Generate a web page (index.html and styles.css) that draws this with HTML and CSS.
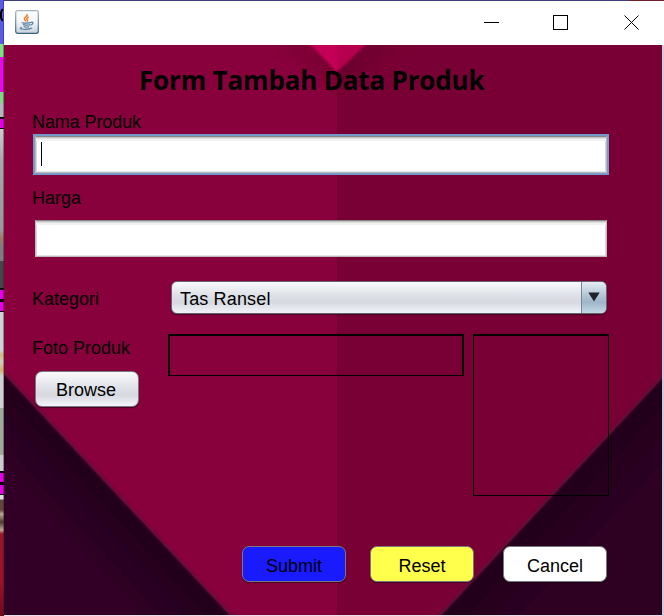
FILE: index.html
```html
<!DOCTYPE html>
<html lang="id">
<head>
<meta charset="utf-8">
<title>Form Tambah Data Produk</title>
<link rel="stylesheet" href="styles.css">
</head>
<body>
<div class="desktop">
  <div class="behind"><span class="behind-glyph"></span></div>
  <div class="window">
    <header class="titlebar">
      <svg class="java" width="24" height="24" viewBox="0 0 24 24">
        <defs><linearGradient id="tile" x2="0" y2="1"><stop offset="0" stop-color="#fdfdfe"/><stop offset=".5" stop-color="#f3f5f7"/><stop offset="1" stop-color="#c4d0da"/></linearGradient>
        <linearGradient id="rim" x2="0" y2="1"><stop offset="0" stop-color="#a7b4bf"/><stop offset="1" stop-color="#35617f"/></linearGradient></defs>
        <rect x=".7" y=".7" width="22.6" height="22.6" rx="2" fill="url(#tile)" stroke="url(#rim)" stroke-width="1.2"/>
        <path d="M12.2 4c1 2.2-3.8 3.2-2.8 5.3.4.9 1.400 1.200 1.500 2.200M13.800 6.800c-3.200 1.500-2 2.500-1.300 3.300.4.5.1 1-.3 1.400" fill="none" stroke="#ee7d2c" stroke-width="1.500"/>
        <path d="M7 12.300c-1 1 7.500 1.100 9.500 0M16 12.300c3-.8 2.500 2.200-.7 2.900M8 14.500c1 .8 5.500.8 7 0M8.700 16.600c1.500.7 4 .7 5.500 0M7 17.500c-6 1.700 6 2.700 10 .6" fill="none" stroke="#527f9e" stroke-width="1.150"/>
      </svg>
      <svg class="controls" width="156" height="16" viewBox="0 0 156 16" fill="none" stroke="#000" stroke-width="1">
        <path d="M0 7.500h15M69.500.5h14v14h-14z" shape-rendering="crispEdges"/>
        <path d="M140.500.5l14 14M154.500.5l-14 14"/>
      </svg>
    </header>
    <main class="content">
      <svg class="backdrop" width="658" height="570" viewBox="0 0 658 570">
        <defs>
          <linearGradient id="shadeL" gradientUnits="userSpaceOnUse" x1="114" y1="449" x2="66" y2="493"><stop offset="0" stop-color="#20001a"/><stop offset=".3" stop-color="#25001e"/><stop offset="1" stop-color="#300025"/></linearGradient>
          <linearGradient id="shadeR" gradientUnits="userSpaceOnUse" x1="547" y1="450" x2="592" y2="492"><stop offset="0" stop-color="#20001a"/><stop offset=".3" stop-color="#24001d"/><stop offset="1" stop-color="#2d0022"/></linearGradient>
          <linearGradient id="topL" x1="0" x2="1"><stop offset="0" stop-color="#76002f" stop-opacity="0"/><stop offset="1" stop-color="#6e002c"/></linearGradient>
          <linearGradient id="topR" x1="0" x2="1"><stop offset="0" stop-color="#60002a"/><stop offset="1" stop-color="#790034" stop-opacity="0"/></linearGradient>
          <filter id="soft" x="-10%" y="-10%" width="120%" height="120%"><feGaussianBlur stdDeviation="1.100"/></filter>
          <filter id="haze" x="-30%" y="-30%" width="160%" height="160%"><feGaussianBlur stdDeviation="5"/></filter>
        </defs>
        <path fill="#88003c" d="M0 0h333v570H0z"/>
        <path fill="#790034" d="M333 0h325v570H333z"/>
        <path fill="url(#topL)" filter="url(#haze)" opacity=".6" d="M250-10h60l23 37v16z"/>
        <path fill="url(#topR)" filter="url(#haze)" opacity=".8" d="M356-10h60l-83 53V27z"/>
        <g filter="url(#soft)">
          <path fill="url(#shadeL)" stroke="#6d0e3d" stroke-width="2.500" d="M-8 319L229 572v8H-8z"/>
          <path fill="url(#shadeR)" stroke="#680f3b" stroke-width="2.500" d="M666 323L434 572v8h232z"/>
          <path fill="#c40056" d="M301-6h32v33z"/>
          <path fill="#b6004f" d="M333-6h35l-35 33z"/>
        </g>
      </svg>
      <h1 class="title">Form Tambah Data Produk</h1>
      <section class="form">
        <label class="label name-label">Nama Produk</label>
        <div class="field focused"><span class="caret"></span></div>
        <label class="label price-label">Harga</label>
        <div class="field"></div>
        <div class="category">
          <label class="label">Kategori</label>
          <div class="combo"><span class="combo-text">Tas Ransel</span><span class="combo-arrow"><svg width="12" height="10" viewBox="0 0 12 10"><path d="M.3.500h11.400L6 9.500z" fill="#202428"/></svg></span></div>
        </div>
        <div class="photo">
          <div class="photo-left"><label class="label">Foto Produk</label><button class="btn browse">Browse</button></div>
          <div class="path-box"></div>
          <div class="preview"></div>
        </div>
        <div class="actions">
          <button class="btn submit">Submit</button>
          <button class="btn reset">Reset</button>
          <button class="btn cancel">Cancel</button>
        </div>
      </section>
    </main>
  </div>
  <div class="edge"></div>
</div>
</body>
</html>
```
FILE: styles.css
```css
* { box-sizing: border-box; }
body { margin: 0; font: 18px/20px "Liberation Sans", Arial, sans-serif; color: #000; }
.desktop { display: grid; grid-template-columns: 4px 658px 2px; height: 616px; background: #e6dce6; overflow: hidden; }
.edge { background: linear-gradient(#701f2c 0 1px, #fff 1px 45px, #d2ccd6 45px); }
.behind {
  border-right: 1px solid rgba(30, 30, 50, .4);
  overflow: hidden;
  background: linear-gradient(#5a5ae8 0 44px, #80e080 44px 57px, #e60ae6 57px 92px, #80d880 92px 103px, #b4b6ba 103px 117px, #000 117px 119px, #e600e6 119px 128px, #000 128px 129px, #d0ccc8 129px, #aaa6a8 162px, #9c9899 230px, #a07868 238px, #807c7c 246px 261px, #484644 261px 288px, #000 288px 290px, #e600e6 290px 299px, #000 299px 302px, #e600e6 302px 311px, #000 311px 312px, #d0d2d2 312px 350px, #d0b880 355px, #d2ccc0 362px, #d0b070 370px, #d0d2d2 376px 408px, #a0aa98 408px 455px, #ccc 455px 471px, #000 471px 473px, #e600e6 473px 482px, #000 482px 485px, #e600e6 485px 494px, #000 494px 495px, #ddd 495px 499px, #61453b 500px 510px, #c0a890 514px, #503830 522px, #c0a490 530px, #981228 534px, #a01028 580px, #700a1a 616px);
}
.behind-glyph { display: block; width: 5px; height: 14px; margin-top: 8px; border: 2px solid #000; border-right: 0; border-radius: 6px 0 0 6px; }
.window { display: flex; flex-direction: column; height: 615px; }
.titlebar { display: flex; justify-content: space-between; align-items: flex-start; height: 45px; padding: 9px 22px 0 11px; background: linear-gradient(90deg, #403e78 625px, #701f2c 625px) 0 0 / 100% 1px no-repeat #fff; }
.java { display: block; margin-top: 1px; }
.controls { display: block; margin-top: 6px; }
.content { position: relative; height: 570px; overflow: hidden; }
.backdrop { position: absolute; inset: 0; }
.title { position: relative; margin: 17px 0 0 135px; font: bold 26px/36px "Open Sans", "Noto Sans", sans-serif; letter-spacing: -.17px; white-space: nowrap; }
.form { position: relative; display: flex; flex-direction: column; padding: 0 53px 0 28px; }
.label { display: block; height: 20px; white-space: nowrap; }
.name-label { margin-top: 14px; letter-spacing: -.1px; }
.price-label { margin-top: 15px; }
.field { height: 37px; margin: 12px 2px 0 3px; background: #fff; border: 1px solid #bcbcbc; border-top-color: #868686; box-shadow: inset 0 1px #c4c4c4, inset 0 2px #dedede, inset 0 4px #f1f1f1, inset 1px 0 #d8d8d8, inset -1px 0 #d8d8d8, inset 0 -1px #e4e4e4; }
.field.focused { position: relative; margin: 4px 2px 0 3px; outline: 2px solid #739ac8; }
.caret { position: absolute; left: 5px; top: 5px; width: 1px; height: 24px; background: #000; }
.category { display: flex; justify-content: space-between; align-items: center; height: 34px; margin-top: 23px; padding-right: 2px; }
.category .label { margin-top: 3px; }
.combo { display: flex; width: 436px; height: 33px; border: 1px solid #65656f; border-radius: 6px; overflow: hidden; background: linear-gradient(#fbfbfc, #dfe2e8 40%, #d6d9df 65%, #f1f3f8); box-shadow: 0 1px 1px rgba(20, 0, 20, .5); }
.combo-text { flex: 1; padding: 7px 0 0 8px; line-height: 20px; letter-spacing: .15px; }
.combo-arrow { width: 25px; padding: 10px 0 0 6px; border-left: 1px solid #748898; background: linear-gradient(#e4edf3, #b1c4d5 45%, #9fb5c9 65%, #c4d9e8); }
.combo-arrow svg { display: block; }
.photo { display: grid; grid-template-columns: 136px 296px 136px; column-gap: 0; height: 162px; margin-top: 20px; align-items: start; }
.preview { margin-left: 9px; width: 136px; height: 162px; border: 1px solid #000; border-top-width: 2px; }
.path-box { height: 42px; border: 2px solid #000; border-bottom-width: 1px; }
.photo-left .label { margin-top: 4px; }
.btn { display: block; width: 104px; height: 36px; padding: 3px 0 0; border: 1px solid #787880; border-radius: 7px; font: inherit; color: #000; box-shadow: 0 1px 1px rgba(20, 0, 20, .55); }
.browse { margin: 13px 0 0 3px; padding: 2px 2px 0 0; background: linear-gradient(#fbfbfc, #dfe2e8 45%, #d5d8df 68%, #f4f6fa); }
.actions { display: flex; justify-content: flex-end; gap: 24px; margin-top: 50px; padding-right: 2px; }
.actions .btn { width: 104px; }
.submit { background: #1a1aff; }
.reset { background: #ffff4c; }
.cancel { background: #fff; }
.actions .cancel { margin-left: 5px; }
```
